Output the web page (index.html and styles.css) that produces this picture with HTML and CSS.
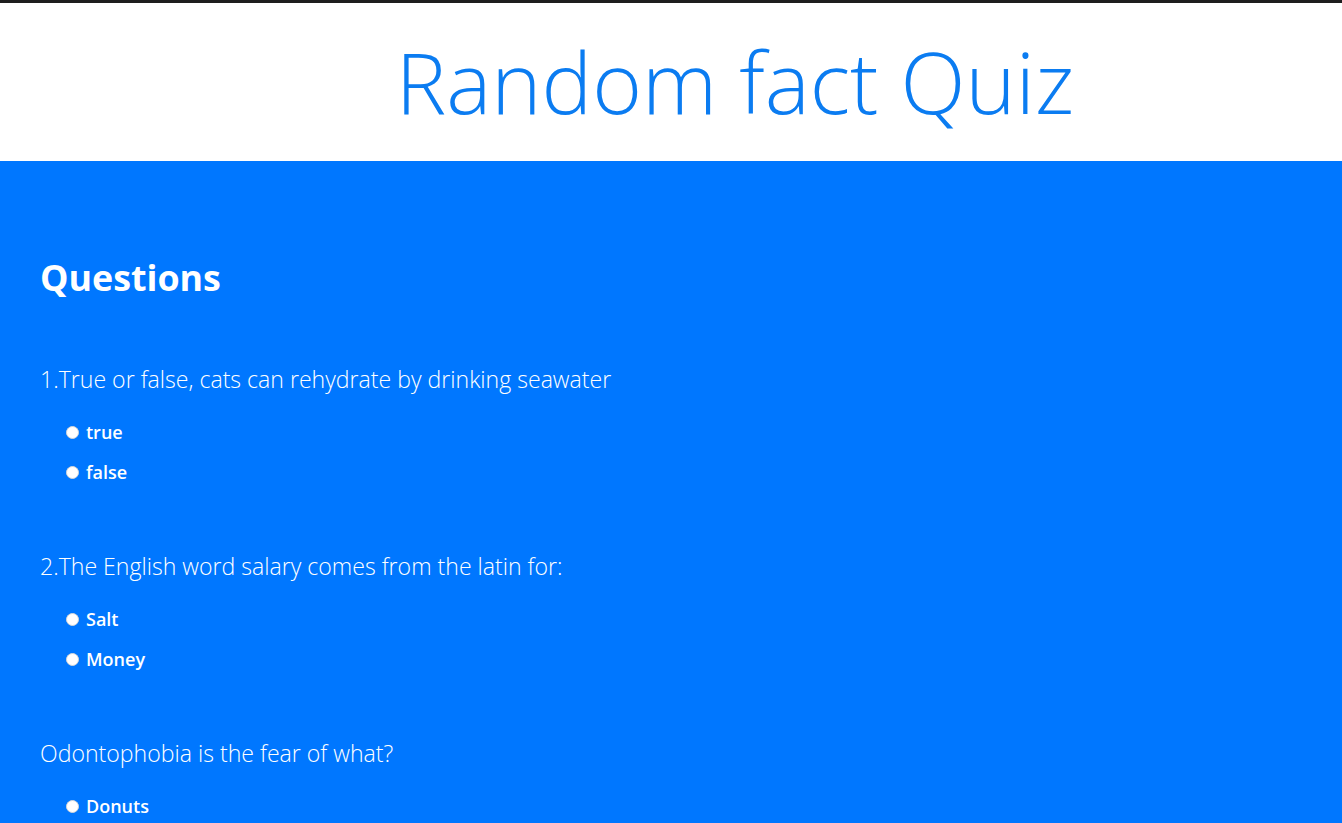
FILE: index.html
```html
<!DOCTYPE html>
<html lang="en">
<head>
<meta charset="utf-8">
<title>Random fact Quiz</title>
<link rel="stylesheet" href="styles.css">
</head>
<body>
<header class="site-header">
  <h1 class="title">Random fact Quiz</h1>
</header>
<main class="quiz">
  <h2 class="quiz-heading">Questions</h2>
  <section class="question">
    <p class="question-text">1.True or false, cats can rehydrate by drinking seawater</p>
    <label class="option"><input type="radio" name="q1" class="radio"><span>true</span></label>
    <label class="option"><input type="radio" name="q1" class="radio"><span>false</span></label>
  </section>
  <section class="question">
    <p class="question-text">2.The English word salary comes from the latin for:</p>
    <label class="option"><input type="radio" name="q2" class="radio"><span>Salt</span></label>
    <label class="option"><input type="radio" name="q2" class="radio"><span>Money</span></label>
  </section>
  <section class="question">
    <p class="question-text">Odontophobia is the fear of what?</p>
    <label class="option"><input type="radio" name="q3" class="radio"><span>Donuts</span></label>
  </section>
</main>
</body>
</html>
```

FILE: styles.css
```css
html, body {
  margin: 0;
  padding: 0;
}
body {
  font-family: "Open Sans", "Noto Sans", sans-serif;
  background: #0077ff;
  color: #fff;
}
.site-header {
  background: #fff;
  border-top: 3px solid #1e1e1e;
  height: 158px;
  display: flex;
  align-items: center;
  justify-content: center;
  padding-left: 128px;
}
.title {
  margin: 0 0 2px;
  font-weight: 300;
  font-size: 85px;
  line-height: 1.2;
  color: #0b7cf1;
}
.quiz {
  display: flex;
  flex-direction: column;
  padding: 96px 40px 0;
}
.quiz-heading {
  margin: 0 0 66px;
  font-size: 35.8px;
  line-height: 40px;
  font-weight: 700;
}
.question {
  display: flex;
  flex-direction: column;
  margin-bottom: 58px;
}
.question-text {
  margin: 0 0 17px;
  font-size: 23.1px;
  line-height: 32px;
  font-weight: 300;
}
.option {
  display: flex;
  align-items: center;
  height: 40px;
  padding-left: 26px;
  font-size: 18px;
  font-weight: 600;
  gap: 7px;
}
.radio {
  appearance: none;
  -webkit-appearance: none;
  margin: 0;
  width: 13px;
  height: 13px;
  border-radius: 50%;
  background: #fff;
  border: 1px solid #d8d8d8;
  box-sizing: border-box;
}
```
